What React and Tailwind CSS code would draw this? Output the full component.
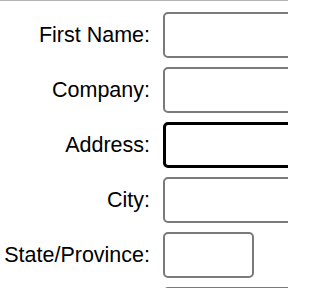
export default function App() {
  const rows = [
    { label: "First Name:", w: "w-[220px]" },
    { label: "Company:", w: "w-[220px]" },
    { label: "Address:", w: "w-[220px]", focus: true },
    { label: "City:", w: "w-[220px]" },
    { label: "State/Province:", w: "w-[91px]" },
    { label: "", w: "w-[220px]" },
  ];
  return (
    <div className="w-[288px] h-[288px] overflow-hidden bg-white" style={{ fontFamily: '"Liberation Sans", Arial, sans-serif' }}>
      <div className="h-px bg-[#b4b4b4]" />
      <div className="grid grid-cols-[150px_1fr] gap-x-[13px] gap-y-[9px] pt-[11px]">
        {rows.map((r, i) => (
          <div key={i} className="contents">
            <label className="text-[21.5px] leading-[46px] text-right text-black whitespace-nowrap">{r.label}</label>
            <input
              type="text"
              aria-label={r.label || "Postal code"}
              className={
                "h-[46px] rounded-[5px] bg-white outline-none " +
                r.w +
                (r.focus ? " border-[3px] border-black" : " border-2 border-[#7a7a7a]")
              }
            />
          </div>
        ))}
      </div>
    </div>
  );
}
